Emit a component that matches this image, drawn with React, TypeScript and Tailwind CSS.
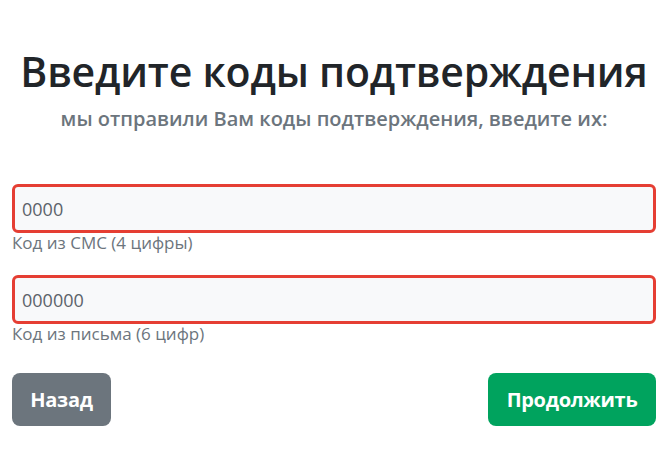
import React from "react";

export default function App() {
  return (
    <div
      className="w-[671px] h-[463px] bg-white overflow-hidden"
      style={{ fontFamily: '"Open Sans", "Noto Sans", sans-serif' }}
    >
      <div className="ml-[12px] mr-[15px] pt-[46px]">
        <h1 className="text-center text-[41px] leading-[50px] font-semibold text-[#212529] tracking-[-0.2px]">
          Введите коды подтверждения
        </h1>
        <h5 className="mt-[11px] text-center text-[20px] leading-[24px] font-semibold text-[#6c757d]">
          мы отправили Вам коды подтверждения, введите их:
        </h5>

        <div className="mt-[53px]">
          <input
            defaultValue="0000"
            className="block w-full h-[49px] border-[3px] border-[#e53e33] rounded-[6px] bg-[#f8f9fa] px-[7px] text-[18px] text-[#5c636a] outline-none"
          />
          <div className="text-[17px] leading-[20px] text-[#6c757d]">Код из СМС (4 цифры)</div>
        </div>

        <div className="mt-[22px]">
          <input
            defaultValue="000000"
            className="block w-full h-[49px] border-[3px] border-[#e53e33] rounded-[6px] bg-[#f8f9fa] px-[7px] text-[18px] text-[#5c636a] outline-none"
          />
          <div className="text-[17px] leading-[20px] text-[#6c757d]">Код из письма (6 цифр)</div>
        </div>

        <div className="mt-[29px] flex justify-between">
          <button className="h-[53px] w-[99px] rounded-[8px] bg-[#6c757d] text-white text-[20px] font-bold tracking-[-0.3px]">
            Назад
          </button>
          <button className="h-[53px] w-[168px] rounded-[8px] bg-[#00a35e] text-white text-[20px] font-bold tracking-[-0.3px]">
            Продолжить
          </button>
        </div>
      </div>
    </div>
  );
}
